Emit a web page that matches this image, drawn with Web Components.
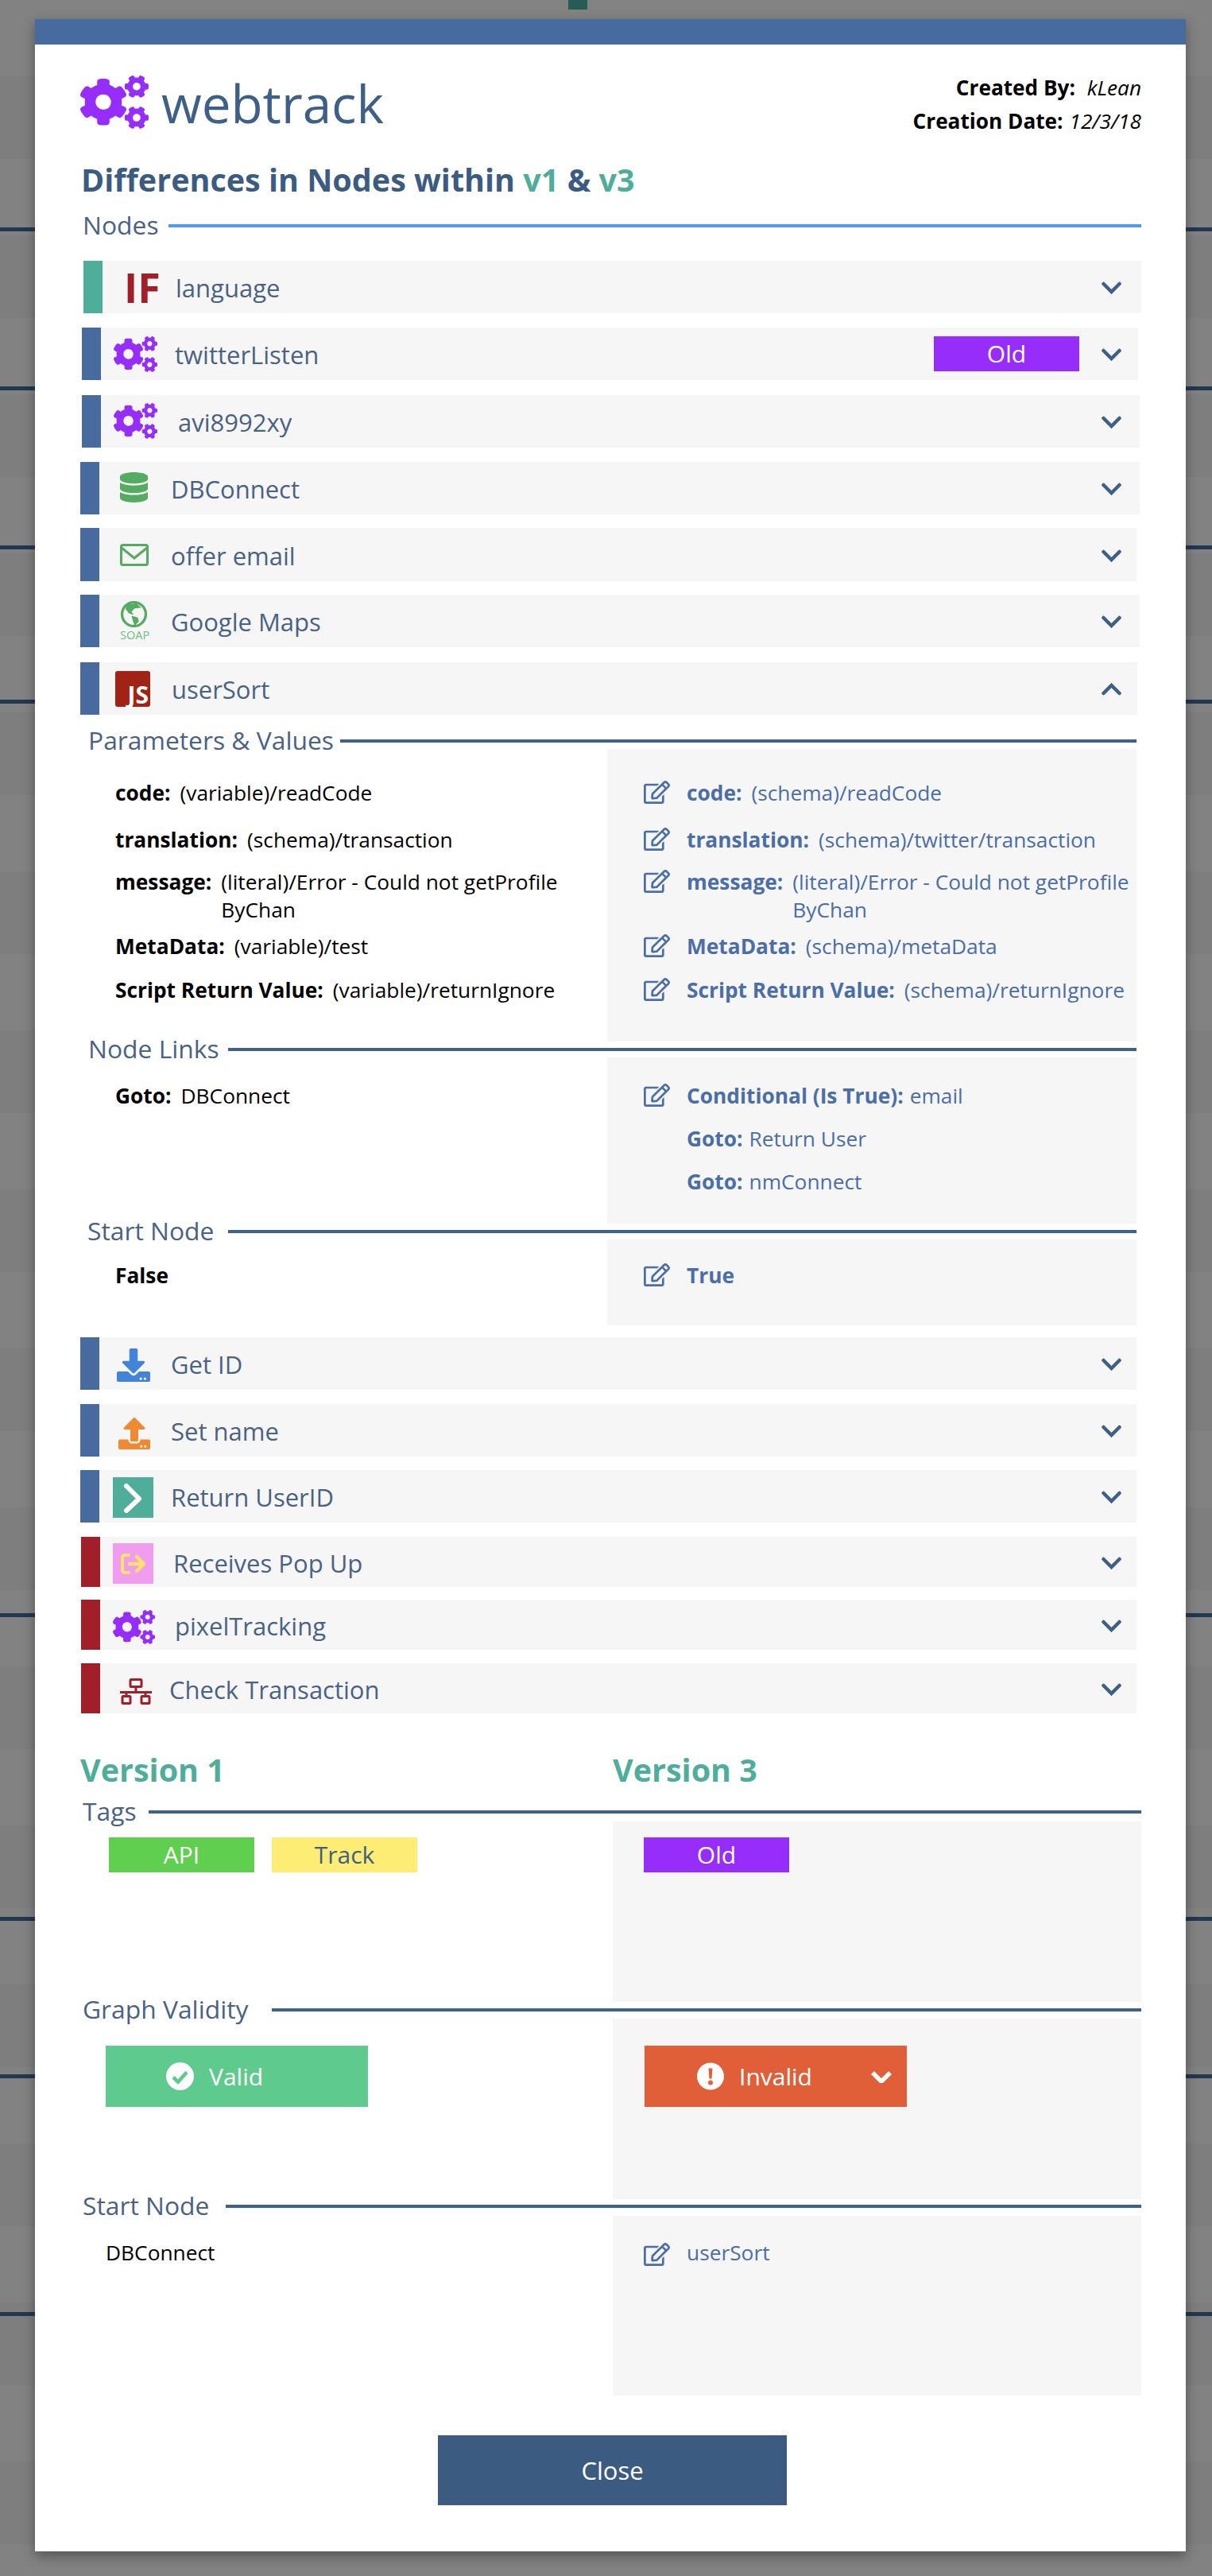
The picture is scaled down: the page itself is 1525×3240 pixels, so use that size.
<!DOCTYPE html>
<html>
<head>
<meta charset="utf-8">
<style>
  html, body { margin: 0; padding: 0; }
  body { width: 1525px; height: 3240px; overflow: hidden; position: relative; background: #808080; font-family: "Open Sans", "Liberation Sans", sans-serif; }
</style>
</head>
<body>
<wt-backdrop></wt-backdrop>
<wt-modal>
  <wt-header></wt-header>
  <wt-title>Differences in Nodes within <em>v1</em> &amp; <em>v3</em></wt-title>

  <wt-section label="Nodes" x="104" lx="212" color="#4f9df0" gap="18"></wt-section>
  <wt-row gap="34" x="105" r="1436" h="66" bar="#4fae9a" ix="156" tx="222" text="language"><wt-if slot="icon"></wt-if></wt-row>
  <wt-row gap="18" x="103" r="1432" h="66" bar="#476b9f" ix="143" tx="221" text="twitterListen" tag="Old"><wt-icon slot="icon" name="cogs" w="55" h="45"></wt-icon></wt-row>
  <wt-row gap="19" x="103" r="1434" h="66" bar="#476b9f" ix="143" iy="-2" tx="225" text="avi8992xy"><wt-icon slot="icon" name="cogs" w="55" h="45"></wt-icon></wt-row>
  <wt-row gap="18" x="101" r="1434" h="66" bar="#476b9f" ix="151" iy="-2" tx="216" text="DBConnect"><wt-icon slot="icon" name="db" w="35" h="38"></wt-icon></wt-row>
  <wt-row gap="17" x="101" r="1430" h="67" bar="#476b9f" ix="151" tx="216" text="offer email"><wt-icon slot="icon" name="mail" w="36" h="28"></wt-icon></wt-row>
  <wt-row gap="17" x="101" r="1434" h="66" bar="#476b9f" ix="151" tx="216" text="Google Maps"><wt-soap slot="icon"></wt-soap></wt-row>
  <wt-row gap="19" x="101" r="1431" h="66" bar="#476b9f" ix="145" tx="217" text="userSort" open><wt-js slot="icon"></wt-js></wt-row>

  <wt-section label="Parameters &amp; Values" x="111" lx="428" r="1430" gap="23"></wt-section>
  <wt-diff h="368" split="764" r="1430">
    <wt-kv slot="left" label="code:" top="38">(variable)/readCode</wt-kv>
    <wt-kv slot="left" label="translation:" top="24">(schema)/transaction</wt-kv>
    <wt-kv slot="left" label="message:" top="18">(literal)/Error - Could not getProfile<br>ByChan</wt-kv>
    <wt-kv slot="left" label="MetaData:" top="11">(variable)/test</wt-kv>
    <wt-kv slot="left" label="Script Return Value:" top="20">(variable)/returnIgnore</wt-kv>
    <wt-kv slot="right" edit label="code:" top="38">(schema)/readCode</wt-kv>
    <wt-kv slot="right" edit label="translation:" top="24">(schema)/twitter/transaction</wt-kv>
    <wt-kv slot="right" edit label="message:" top="18">(literal)/Error - Could not getProfile<br>ByChan</wt-kv>
    <wt-kv slot="right" edit label="MetaData:" top="11">(schema)/metaData</wt-kv>
    <wt-kv slot="right" edit label="Script Return Value:" top="20">(schema)/returnIgnore</wt-kv>
  </wt-diff>

  <wt-section label="Node Links" x="111" lx="287" r="1430"></wt-section>
  <wt-diff h="209" split="764" r="1430">
    <wt-kv slot="left" label="Goto:" top="31">DBConnect</wt-kv>
    <wt-kv slot="right" edit tight label="Conditional (Is True):" top="31">email</wt-kv>
    <wt-kv slot="right" blank tight label="Goto:" top="19">Return User</wt-kv>
    <wt-kv slot="right" blank tight label="Goto:" top="19">nmConnect</wt-kv>
  </wt-diff>

  <wt-section label="Start Node" x="110" lx="287" r="1430"></wt-section>
  <wt-diff h="108" split="764" r="1430">
    <wt-kv slot="left" label="False" top="28"></wt-kv>
    <wt-kv slot="right" edit label="True" top="28"></wt-kv>
  </wt-diff>

  <wt-row gap="15" x="101" r="1430" h="66" bar="#476b9f" ix="147" iy="4" tx="216" text="Get ID"><wt-icon slot="icon" name="download" w="42" h="42"></wt-icon></wt-row>
  <wt-row gap="18" x="101" r="1430" h="66" bar="#476b9f" ix="149" iy="8" tx="216" text="Set name"><wt-icon slot="icon" name="upload" w="40" h="40"></wt-icon></wt-row>
  <wt-row gap="17" x="101" r="1430" h="66" bar="#476b9f" ix="142" iy="2" tx="216" text="Return UserID"><wt-icon slot="icon" name="ret" w="51" h="51"></wt-icon></wt-row>
  <wt-row gap="18" x="102" r="1430" h="63" bar="#a01f28" ix="142" iy="4" tx="219" text="Receives Pop Up"><wt-icon slot="icon" name="popup" w="51" h="51"></wt-icon></wt-row>
  <wt-row gap="16" x="102" r="1430" h="63" bar="#a01f28" ix="142" iy="5" tx="221" text="pixelTracking"><wt-icon slot="icon" name="cogs" w="53" h="43"></wt-icon></wt-row>
  <wt-row gap="17" x="102" r="1430" h="63" bar="#a01f28" ix="151" iy="7" tx="214" text="Check Transaction"><wt-icon slot="icon" name="sitemap" w="40" h="33"></wt-icon></wt-row>

  <wt-versions></wt-versions>

  <wt-section label="Tags" x="104" lx="187" gap="18"></wt-section>
  <wt-diff h="227" split="771" top="2" lpad="36" rpad="39">
    <wt-tag slot="left" color="#60ce4e" top="20">API</wt-tag>
    <wt-tag slot="left" color="#fded74" ink="#3f5f82" top="20" left="22">Track</wt-tag>
    <wt-tag slot="right" color="#962dfa" top="20">Old</wt-tag>
  </wt-diff>

  <wt-section label="Graph Validity" x="104" lx="342"></wt-section>
  <wt-diff h="227" split="771" top="1" lpad="32" rpad="40">
    <wt-status slot="left" kind="valid" top="34">Valid</wt-status>
    <wt-status slot="right" kind="invalid" top="34">Invalid</wt-status>
  </wt-diff>

  <wt-section label="Start Node" x="104" lx="284" gap="-1"></wt-section>
  <wt-diff h="226" split="771" top="2" lpad="32" rpad="39">
    <wt-kv slot="left" top="29">DBConnect</wt-kv>
    <wt-kv slot="right" edit iy="5" top="29" weight="500">userSort</wt-kv>
  </wt-diff>

  <wt-close>Close</wt-close>
</wt-modal>

<script>
const ICONS = {
  cogs: { box: '0 0 640 512', fill: '#962dfa', d: 'M512.1 191l-8.2 14.3c-3 5.3-9.4 7.5-15.1 5.4-11.8-4.4-22.6-10.7-32.1-18.6-4.6-3.8-5.8-10.5-2.8-15.7l8.2-14.3c-6.9-8-12.3-17.3-15.9-27.4h-16.5c-6 0-11.2-4.3-12.2-10.3-2-12-2.1-24.6 0-37.1 1-6 6.2-10.4 12.2-10.4h16.5c3.6-10.1 9-19.4 15.9-27.4l-8.2-14.3c-3-5.2-1.9-11.9 2.8-15.7 9.5-7.9 20.4-14.2 32.1-18.6 5.7-2.1 12.1.1 15.1 5.4l8.2 14.3c10.5-1.9 21.2-1.9 31.7 0L552 6.3c3-5.3 9.4-7.5 15.1-5.4 11.8 4.4 22.6 10.7 32.1 18.6 4.6 3.8 5.8 10.5 2.8 15.7l-8.2 14.3c6.9 8 12.3 17.3 15.9 27.4h16.5c6 0 11.2 4.3 12.2 10.3 2 12 2.1 24.6 0 37.1-1 6-6.2 10.4-12.2 10.4h-16.5c-3.6 10.1-9 19.4-15.9 27.4l8.2 14.3c3 5.2 1.9 11.9-2.8 15.7-9.5 7.9-20.4 14.2-32.1 18.6-5.7 2.1-12.1-.1-15.1-5.4l-8.2-14.3c-10.4 1.9-21.2 1.9-31.7 0zm-10.5-58.8c38.5 29.6 82.4-14.3 52.8-52.8-38.5-29.7-82.4 14.3-52.8 52.8zM386.3 286.1l33.7 16.8c10.1 5.8 14.5 18.1 10.5 29.1-8.9 24.2-26.4 46.4-42.6 65.8-7.4 8.9-20.2 11.1-30.3 5.3l-29.1-16.8c-16 13.7-34.6 24.6-54.9 31.7v33.6c0 11.6-8.3 21.6-19.7 23.6-24.6 4.2-50.4 4.4-75.9 0-11.5-2-20-11.9-20-23.6V418c-20.3-7.2-38.9-18-54.9-31.7L74 403c-10 5.8-22.9 3.6-30.3-5.3-16.2-19.4-33.3-41.6-42.2-65.7-4-10.9.4-23.2 10.5-29.1l33.3-16.8c-3.9-20.9-3.9-42.4 0-63.4L12 205.8c-10.1-5.8-14.6-18.1-10.5-29 8.9-24.2 26-46.4 42.2-65.8 7.4-8.9 20.2-11.1 30.3-5.3l29.1 16.8c16-13.7 34.6-24.6 54.9-31.7V57.1c0-11.5 8.2-21.5 19.6-23.5 24.6-4.2 50.5-4.4 76-.1 11.5 2 20 11.9 20 23.6v33.6c20.3 7.2 38.9 18 54.9 31.7l29.1-16.8c10-5.8 22.9-3.6 30.3 5.3 16.2 19.4 33.2 41.6 42.1 65.8 4 10.9.1 23.2-10 29.1l-33.7 16.8c3.9 21 3.9 42.5 0 63.5zm-117.6 21.1c59.2-77-28.7-164.9-105.7-105.7-59.2 77 28.7 164.9 105.7 105.7zm243.4 182.7l-8.2 14.3c-3 5.3-9.4 7.5-15.1 5.4-11.8-4.4-22.6-10.7-32.1-18.6-4.6-3.8-5.8-10.5-2.8-15.7l8.2-14.3c-6.9-8-12.3-17.3-15.9-27.4h-16.5c-6 0-11.2-4.3-12.2-10.3-2-12-2.1-24.6 0-37.1 1-6 6.2-10.4 12.2-10.4h16.5c3.6-10.1 9-19.4 15.9-27.4l-8.2-14.3c-3-5.2-1.9-11.9 2.8-15.7 9.5-7.9 20.4-14.2 32.1-18.6 5.7-2.1 12.1.1 15.1 5.4l8.2 14.3c10.5-1.9 21.2-1.9 31.7 0l8.2-14.3c3-5.3 9.4-7.5 15.1-5.4 11.8 4.4 22.6 10.7 32.1 18.6 4.6 3.8 5.8 10.5 2.8 15.7l-8.2 14.3c6.9 8 12.3 17.3 15.9 27.4h16.5c6 0 11.2 4.3 12.2 10.3 2 12 2.1 24.6 0 37.1-1 6-6.2 10.4-12.2 10.4h-16.5c-3.6 10.1-9 19.4-15.9 27.4l8.2 14.3c3 5.2 1.9 11.9-2.8 15.7-9.5 7.9-20.4 14.2-32.1 18.6-5.7 2.1-12.1-.1-15.1-5.4l-8.2-14.3c-10.4 1.9-21.2 1.9-31.7 0zM501.6 431c38.5 29.6 82.4-14.3 52.8-52.8-38.5-29.6-82.4 14.3-52.8 52.8z' },
  db: { box: '0 0 448 512', fill: '#54ab62', d: 'M448 73.143v45.714C448 159.143 347.667 192 224 192S0 159.143 0 118.857V73.143C0 32.857 100.333 0 224 0s224 32.857 224 73.143zM448 176v102.857C448 319.143 347.667 352 224 352S0 319.143 0 278.857V176c48.125 33.143 136.208 48.572 224 48.572S399.874 209.143 448 176zm0 160v102.857C448 479.143 347.667 512 224 512S0 479.143 0 438.857V336c48.125 33.143 136.208 48.572 224 48.572S399.874 369.143 448 336z' },
  download: { box: '0 0 512 512', fill: '#4285d8', d: 'M216 0h80c13.3 0 24 10.7 24 24v168h87.7c17.8 0 26.7 21.5 14.1 34.1L269.7 378.3c-7.5 7.5-19.8 7.5-27.3 0L90.1 226.1c-12.6-12.6-3.7-34.1 14.1-34.1H192V24c0-13.3 10.7-24 24-24zm296 376v112c0 13.3-10.7 24-24 24H24c-13.3 0-24-10.7-24-24V376c0-13.3 10.7-24 24-24h146.7l49 49c20.1 20.1 52.5 20.1 72.6 0l49-49H488c13.3 0 24 10.7 24 24zm-124 88c0-11-9-20-20-20s-20 9-20 20 9 20 20 20 20-9 20-20zm64 0c0-11-9-20-20-20s-20 9-20 20 9 20 20 20 20-9 20-20z' },
  upload: { box: '0 0 512 512', fill: '#f08a32', d: 'M296 384h-80c-13.3 0-24-10.7-24-24V192h-87.7c-17.8 0-26.7-21.5-14.1-34.1L242.3 5.7c7.5-7.5 19.8-7.5 27.3 0l152.2 152.2c12.6 12.6 3.7 34.1-14.1 34.1H320v168c0 13.3-10.7 24-24 24zm216-8v112c0 13.3-10.7 24-24 24H24c-13.3 0-24-10.7-24-24V376c0-13.3 10.7-24 24-24h136v8c0 30.9 25.1 56 56 56h80c30.9 0 56-25.1 56-56v-8h136c13.3 0 24 10.7 24 24zm-124 88c0-11-9-20-20-20s-20 9-20 20 9 20 20 20 20-9 20-20zm64 0c0-11-9-20-20-20s-20 9-20 20 9 20 20 20 20-9 20-20z' },
  edit: { box: '0 0 576 512', fill: '#4a6ea5', d: 'M402.3 344.9l32-32c5-5 13.7-1.5 13.7 5.7V464c0 26.5-21.5 48-48 48H48c-26.5 0-48-21.5-48-48V112c0-26.5 21.5-48 48-48h273.5c7.1 0 10.7 8.6 5.7 13.7l-32 32c-1.5 1.5-3.5 2.3-5.7 2.3H48v352h352V350.5c0-2.1.8-4.1 2.3-5.6zm156.6-201.8L296.3 405.7l-90.4 10c-26.2 2.9-48.5-19.2-45.6-45.6l10-90.4L432.9 17.1c22.9-22.9 59.9-22.9 82.7 0l43.2 43.2c22.9 22.9 22.9 60 .1 82.8zM460.1 174L402 115.9 216.2 301.8l-7.3 65.3 65.3-7.3L460.1 174zm64.8-79.7l-43.2-43.2c-4.1-4.1-10.8-4.1-14.8 0L436 82l58.1 58.1 30.9-30.9c4-4.2 4-10.8-.1-14.9z' }
};

// icons drawn by hand, not from a single path
const RAW_ICONS = {
  mail: `<svg viewBox="0 0 36 28" preserveAspectRatio="none"><rect x="1.5" y="1.5" width="33" height="25" rx="2" fill="none" stroke="#54ab62" stroke-width="3"/><path d="M2 5l16 13L34 5" fill="none" stroke="#54ab62" stroke-width="3"/></svg>`,
  ret: `<svg viewBox="0 0 51 51"><rect width="51" height="51" fill="#4fae9a"/><path d="M17 11l16 16-16 15" fill="none" stroke="#fff" stroke-width="6" stroke-linecap="round" stroke-linejoin="round"/></svg>`,
  popup: `<svg viewBox="0 0 51 51"><rect width="51" height="51" fill="#f09df0"/><path d="M20 15h-5a3 3 0 0 0-3 3v16a3 3 0 0 0 3 3h5" fill="none" stroke="#fde36a" stroke-width="4" stroke-linecap="round"/><path d="M21 26h17M30 17l9 9-9 9" fill="none" stroke="#fde36a" stroke-width="4.5" stroke-linecap="round" stroke-linejoin="round"/></svg>`,
  sitemap: `<svg viewBox="0 0 40 33"><g fill="none" stroke="#a01f28" stroke-width="3"><rect x="13" y="1.5" width="14" height="9" rx="1"/><path d="M20 10.5v7M0 17.5h40M8 17.5v5M32 17.5v5"/><rect x="3" y="22.5" width="10" height="9" rx="1"/><rect x="27" y="22.5" width="10" height="9" rx="1"/></g></svg>`,
  chevdown: `<svg viewBox="0 0 25 16"><path d="M2.5 3l10 10 10-10" fill="none" stroke="#3f6086" stroke-width="4.5" stroke-linecap="round"/></svg>`,
  chevup: `<svg viewBox="0 0 25 16"><path d="M2.5 13l10-10 10 10" fill="none" stroke="#3f6086" stroke-width="4.5" stroke-linecap="round"/></svg>`,
  globe: `<svg viewBox="0 0 34 32" preserveAspectRatio="none"><circle cx="17" cy="16" r="14.5" fill="none" stroke="#54ab62" stroke-width="3.2"/><path d="M8 4l12-1 6 5-8 1-4 4 3 4-6-2-4-5z" fill="#54ab62"/><path d="M14 18l8 2 1 5-5 5-2-5z" fill="#54ab62"/></svg>`,
  check: `<svg viewBox="0 0 35 34" preserveAspectRatio="none"><ellipse cx="17.5" cy="17" rx="17.5" ry="17" fill="#fff"/><path d="M9 18l6 6 11-12" fill="none" stroke="#5fca8e" stroke-width="4.5"/></svg>`,
  warn: `<svg viewBox="0 0 34 34"><circle cx="17" cy="17" r="17" fill="#fff"/><path d="M14.5 7h5l-1 13h-3z" fill="#e05f38"/><circle cx="17" cy="25" r="3" fill="#e05f38"/></svg>`,
  whitechev: `<svg viewBox="0 0 26 16"><path d="M2 3l11 11 11-11" fill="none" stroke="#fff" stroke-width="5.5"/></svg>`
};

function iconMarkup(name) {
  if (RAW_ICONS[name]) return RAW_ICONS[name];
  const i = ICONS[name];
  return `<svg viewBox="${i.box}" preserveAspectRatio="none"><path fill="${i.fill}" d="${i.d}"/></svg>`;
}

class WtIcon extends HTMLElement {
  constructor() { super(); this.attachShadow({ mode: 'open' }); }
  connectedCallback() {
    const w = this.getAttribute('w') || 24, h = this.getAttribute('h') || 24;
    this.shadowRoot.innerHTML = `
      <style>
        :host { display: block; width: ${w}px; height: ${h}px; flex: none; }
        svg { display: block; width: 100%; height: 100%; }
      </style>${iconMarkup(this.getAttribute('name'))}`;
  }
}

class WtBackdrop extends HTMLElement {
  constructor() { super(); this.attachShadow({ mode: 'open' }); }
  connectedCallback() {
    const lines = [286, 486, 686, 880, 2029, 2411, 2609, 2908];
    this.shadowRoot.innerHTML = `
      <style>
        :host { position: absolute; inset: 0; display: block; overflow: hidden;
          background: repeating-linear-gradient(180deg, #828282 0, #828282 96px, #7e7e7e 96px, #7e7e7e 200px); }
        .line { position: absolute; left: 0; right: 0; height: 5px; background: #22384f; }
        .tick { position: absolute; left: 715px; top: 0; width: 24px; height: 12px; background: #265c54; }
      </style>
      <div class="tick"></div>
      ${lines.map(y => `<div class="line" style="top:${y}px"></div>`).join('')}`;
  }
}

class WtModal extends HTMLElement {
  constructor() {
    super();
    this.attachShadow({ mode: 'open' }).innerHTML = `
      <style>
        :host { display: block; position: relative; width: 1448px; height: 3185px; margin: 24px 0 0 44px;
          background: #fff; box-shadow: 0 6px 14px rgba(0,0,0,.35); }
        .bar { height: 32px; background: #476b9f; }
        .body { padding: 0 56px 0 57px; }
      </style>
      <div class="bar"></div>
      <div class="body"><slot></slot></div>`;
  }
}

class WtHeader extends HTMLElement {
  constructor() {
    super();
    this.attachShadow({ mode: 'open' }).innerHTML = `
      <style>
        :host { display: flex; justify-content: space-between; height: 140px; color: #000; }
        .brand { display: flex; align-items: center; height: 67px; margin-top: 39px; }
        .word { margin-left: 16px; font-size: 65.5px; font-weight: 400; line-height: 67px; color: #3f6086; position: relative; top: 1px; }
        .meta { margin-top: 33px; font-size: 26.2px; line-height: 42px; text-align: right; }
        b { font-weight: 700; margin-right: 8px; }
        i { font-weight: 400; }
      </style>
      <div class="brand">
        <wt-icon name="cogs" w="86" h="67"></wt-icon>
        <span class="word">webtrack</span>
      </div>
      <div class="meta">
        <div><b>Created By:</b> <i>kLean</i></div>
        <div><b>Creation Date:</b><i>12/3/18</i></div>
      </div>`;
  }
}

class WtTitle extends HTMLElement {
  constructor() {
    super();
    this.attachShadow({ mode: 'open' }).innerHTML = `
      <style>
        :host { display: block; margin: 0 0 0 1px; font-size: 39.5px; line-height: 60px; font-weight: 700; color: #3b5c80; }
        ::slotted(em) { font-style: normal; color: #4fae9a; }
      </style><slot></slot>`;
  }
}

class WtSection extends HTMLElement {
  constructor() { super(); this.attachShadow({ mode: 'open' }); }
  connectedCallback() {
    const x = +this.getAttribute('x'), lx = +this.getAttribute('lx');
    const r = +(this.getAttribute('r') || 1436), gap = +(this.getAttribute('gap') || 0);
    const color = this.getAttribute('color') || '#3f6289';
    this.shadowRoot.innerHTML = `
      <style>
        :host { display: flex; align-items: center; height: 20px; margin: ${gap}px ${1436 - r}px 0 ${x - 101}px; }
        .label { width: ${lx - x}px; flex: none; white-space: nowrap; font-size: 31.8px; line-height: 20px; color: #4a6283; position: relative; top: -1px; }
        .line { flex: 1; height: 4px; background: ${color}; }
      </style>
      <div class="label">${this.getAttribute('label')}</div>
      <div class="line"></div>`;
  }
}

class WtRow extends HTMLElement {
  constructor() { super(); this.attachShadow({ mode: 'open' }); }
  connectedCallback() {
    const n = a => +(this.getAttribute(a) || 0);
    const x = n('x'), r = n('r'), ix = n('ix'), tx = n('tx');
    const tag = this.getAttribute('tag');
    this.shadowRoot.innerHTML = `
      <style>
        :host { display: flex; align-items: stretch; height: ${n('h')}px; margin: ${n('gap')}px ${1436 - r}px 0 ${x - 101}px; background: #f6f6f6; }
        .bar { width: 24px; flex: none; background: ${this.getAttribute('bar')}; }
        .icon { flex: none; width: ${tx - ix - 1}px; margin-left: ${ix - x - 24}px; margin-top: ${n('iy')}px; display: flex; align-items: center; }
        .text { flex: 1; align-self: center; font-size: 31px; line-height: 40px; color: #4a6283; white-space: nowrap; position: relative; top: 1px; }
        .tag { margin-right: 28px; align-self: center; }
        .chev { flex: none; width: 25px; height: 16px; align-self: center; margin-right: ${r - 1411}px; position: relative; top: 1px; }
      </style>
      <div class="bar"></div>
      <div class="icon"><slot name="icon"></slot></div>
      <div class="text">${this.getAttribute('text')}</div>
      ${tag ? `<wt-tag class="tag" color="#962dfa">${tag}</wt-tag>` : ''}
      <wt-icon class="chev" name="${this.hasAttribute('open') ? 'chevup' : 'chevdown'}" w="25" h="16"></wt-icon>`;
  }
}

class WtIf extends HTMLElement {
  constructor() {
    super();
    this.attachShadow({ mode: 'open' }).innerHTML = `
      <style>:host { display: block; font-size: 52px; font-weight: 700; line-height: 52px; color: #a01f28; }</style>IF`;
  }
}

class WtSoap extends HTMLElement {
  constructor() {
    super();
    this.attachShadow({ mode: 'open' }).innerHTML = `
      <style>
        :host { display: block; width: 35px; }
        wt-icon { margin-bottom: 3px; }
        div { font-size: 14.5px; line-height: 14px; color: #6cc081; text-align: center; white-space: nowrap; }
      </style>
      <wt-icon name="globe" w="35" h="33"></wt-icon>
      <div>SOAP</div>`;
  }
}

class WtJs extends HTMLElement {
  constructor() {
    super();
    this.attachShadow({ mode: 'open' }).innerHTML = `
      <style>
        :host { display: flex; align-items: flex-end; justify-content: flex-end; box-sizing: border-box; width: 44px; height: 45px; padding: 0 2px 1px 0;
          background: #a02314; border-radius: 3px; color: #fff; font-size: 30px; font-weight: 700; line-height: 28px; }
      </style>JS`;
  }
}

class WtDiff extends HTMLElement {
  constructor() { super(); this.attachShadow({ mode: 'open' }); }
  connectedCallback() {
    const split = +this.getAttribute('split'), r = +(this.getAttribute('r') || 1436);
    const top = +(this.getAttribute('top') || 0);
    const lpad = +(this.getAttribute('lpad') || 44), rpad = +(this.getAttribute('rpad') || 46);
    this.shadowRoot.innerHTML = `
      <style>
        :host { display: flex; height: ${this.getAttribute('h')}px; margin: ${top}px ${1436 - r}px 0 0; }
        .col { box-sizing: border-box; }
        .left { width: ${split - 101}px; padding-left: ${lpad}px; flex: none; color: #000; display: flex; flex-wrap: wrap; align-content: flex-start; }
        .right { flex: 1; padding-left: ${rpad}px; background: #f6f6f6; color: #4a6ea5; display: flex; flex-wrap: wrap; align-content: flex-start; }
      </style>
      <div class="col left"><slot name="left"></slot></div>
      <div class="col right"><slot name="right"></slot></div>`;
  }
}

class WtKv extends HTMLElement {
  constructor() { super(); this.attachShadow({ mode: 'open' }); }
  connectedCallback() {
    const label = this.getAttribute('label');
    const edit = this.hasAttribute('edit'), blank = this.hasAttribute('blank');
    this.shadowRoot.innerHTML = `
      <style>
        :host { display: flex; width: 100%; margin-top: ${this.getAttribute('top') || 0}px; font-size: 26.3px; line-height: 35px; }
        wt-icon { margin: ${this.getAttribute('iy') || 2}px 21px 0 0; }
        .gap { flex: none; width: 54px; }
        b { font-weight: 700; flex: none; margin-right: ${this.hasAttribute('tight') ? 8 : 12}px; white-space: nowrap; }
        .value { white-space: nowrap; font-weight: ${this.getAttribute('weight') || 400}; }
      </style>
      ${edit ? '<wt-icon name="edit" w="33" h="29"></wt-icon>' : ''}
      ${blank ? '<div class="gap"></div>' : ''}
      ${label ? `<b>${label}</b>` : ''}
      <div class="value"><slot></slot></div>`;
  }
}

class WtTag extends HTMLElement {
  constructor() { super(); this.attachShadow({ mode: 'open' }); }
  connectedCallback() {
    this.shadowRoot.innerHTML = `
      <style>
        :host { display: block; box-sizing: border-box; width: 183px; height: 44px; margin: ${this.getAttribute('top') || 0}px 0 0 ${this.getAttribute('left') || 0}px;
          background: ${this.getAttribute('color')}; color: ${this.getAttribute('ink') || '#fff'};
          font-size: 30px; font-weight: 400; line-height: 44px; text-align: center; }
      </style><slot></slot>`;
  }
}

class WtStatus extends HTMLElement {
  constructor() { super(); this.attachShadow({ mode: 'open' }); }
  connectedCallback() {
    const valid = this.getAttribute('kind') === 'valid';
    this.shadowRoot.innerHTML = `
      <style>
        :host { display: flex; align-items: center; box-sizing: border-box; width: 330px; height: 77px; margin-top: ${this.getAttribute('top') || 0}px;
          padding-left: ${valid ? 76 : 66}px; background: ${valid ? '#5fca8e' : '#e05f38'}; color: #fff; font-size: 30px; font-weight: 400; }
        wt-icon { margin-right: 19px; }
        .drop { margin: 0 19px 0 auto; }
      </style>
      <wt-icon name="${valid ? 'check' : 'warn'}" w="${valid ? 35 : 34}" h="35"></wt-icon>
      <span><slot></slot></span>
      ${valid ? '' : '<wt-icon class="drop" name="whitechev" w="26" h="16"></wt-icon>'}`;
  }
}

class WtVersions extends HTMLElement {
  constructor() {
    super();
    this.attachShadow({ mode: 'open' }).innerHTML = `
      <style>
        :host { display: flex; height: 50px; margin-top: 46px; font-size: 39.5px; font-weight: 700; line-height: 50px; color: #4fae9a; }
        div { width: 670px; }
      </style>
      <div>Version 1</div><span>Version 3</span>`;
  }
}

class WtClose extends HTMLElement {
  constructor() {
    super();
    this.attachShadow({ mode: 'open' }).innerHTML = `
      <style>
        :host { display: block; width: 439px; height: 88px; margin: 50px 0 0 450px; background: #3b5c80; color: #fff;
          font-size: 31px; font-weight: 400; line-height: 88px; text-align: center; }
      </style><slot></slot>`;
  }
}

customElements.define('wt-icon', WtIcon);
customElements.define('wt-backdrop', WtBackdrop);
customElements.define('wt-modal', WtModal);
customElements.define('wt-header', WtHeader);
customElements.define('wt-title', WtTitle);
customElements.define('wt-section', WtSection);
customElements.define('wt-row', WtRow);
customElements.define('wt-if', WtIf);
customElements.define('wt-soap', WtSoap);
customElements.define('wt-js', WtJs);
customElements.define('wt-diff', WtDiff);
customElements.define('wt-kv', WtKv);
customElements.define('wt-tag', WtTag);
customElements.define('wt-status', WtStatus);
customElements.define('wt-versions', WtVersions);
customElements.define('wt-close', WtClose);
</script>
</body>
</html>
